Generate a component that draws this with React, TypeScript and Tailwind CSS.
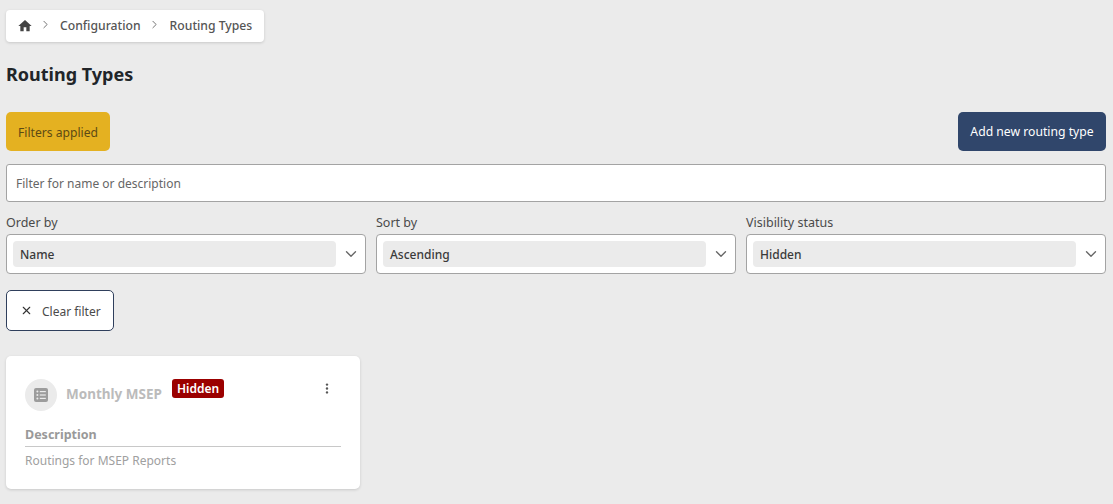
import { ChevronDown, ChevronRight, X } from "lucide-react";

function FilterSelect({ label, value }: { label: string; value: string }) {
  return (
    <div className="min-w-0">
      <label className="block h-[22px] pt-[1px] text-[12.5px] leading-[20px] text-[#4a4a4a]">{label}</label>
      <div className="flex h-[40px] items-center rounded-[4px] border border-[#a3a3a3] bg-white pl-[6px]">
        <div className="flex h-[26px] flex-1 items-center rounded-[4px] bg-[#ebebeb] px-[7px] pt-[2px] text-[12px] font-medium text-[#3a3a3a]">
          {value}
        </div>
        <ChevronDown className="ml-[6px] mr-[5px] h-[18px] w-[18px] text-[#666]" strokeWidth={1.8} />
      </div>
    </div>
  );
}

export default function App() {
  return (
    <div className="h-[504px] overflow-hidden bg-[#ebebeb] pl-[6px] pr-[7px] pt-[10px] font-['Noto_Sans',sans-serif]">
      <nav className="flex h-[32px] w-[258px] items-center rounded-[4px] bg-white pl-[11px] text-[12.2px] font-medium text-[#555] shadow-[0_1px_3px_rgba(0,0,0,0.15)]">
        <svg viewBox="0 0 24 24" className="h-[16px] w-[16px] fill-[#444]">
          <path d="M10 20v-6h4v6h5v-8h3L12 3 2 12h3v8z" />
        </svg>
        <ChevronRight className="mb-[4px] ml-[6px] h-[13px] w-[13px] text-[#555]" strokeWidth={1.5} />
        <span className="ml-[8px] pt-[1px]">Configuration</span>
        <ChevronRight className="mb-[4px] ml-[7px] h-[13px] w-[13px] text-[#555]" strokeWidth={1.5} />
        <span className="ml-[9px] pt-[1px]">Routing Types</span>
      </nav>

      <h1 className="mt-[19px] h-[26px] text-[18px] font-bold leading-[26px] text-[#212529]">Routing Types</h1>

      <div className="mt-[25px] flex items-center justify-between">
        <button className="h-[39px] w-[104px] rounded-[5px] bg-[#e4b121] pt-[3px] text-[12.1px] text-[#5c4a14]">
          Filters applied
        </button>
        <button className="h-[39px] w-[148px] rounded-[5px] bg-[#30466b] pt-[2px] text-[12.2px] text-white">
          Add new routing type
        </button>
      </div>

      <input
        readOnly
        placeholder="Filter for name or description"
        className="mt-[13px] block h-[38px] w-full rounded-[3px] border border-[#a3a3a3] bg-white px-[9px] text-[12px] placeholder:text-[#666]"
      />

      <div className="mt-[10px] grid grid-cols-3 gap-[10px]">
        <FilterSelect label="Order by" value="Name" />
        <FilterSelect label="Sort by" value="Ascending" />
        <FilterSelect label="Visibility status" value="Hidden" />
      </div>

      <button className="mt-[16px] flex h-[41px] w-[108px] items-center rounded-[5px] border border-[#2f3f5c] bg-white pl-[13px] text-[12px] text-[#4a4a4a]">
        <X className="h-[13px] w-[13px] text-[#333]" strokeWidth={2} />
        <span className="ml-[9px] pt-[2px]">Clear filter</span>
      </button>

      <div className="mt-[25px] h-[133px] w-[354px] rounded-[5px] bg-white px-[19px] pt-[23px] shadow-[0_1px_3px_rgba(0,0,0,0.15)]">
        <div className="flex items-start">
          <div className="flex h-[32px] w-[32px] items-center justify-center rounded-full bg-[#ebebeb]">
            <svg viewBox="0 0 16 16" className="h-[16px] w-[16px]">
              <rect x="1" y="1" width="14" height="14" rx="2" fill="#9c9c9c" />
              <g fill="#ebebeb">
                <circle cx="4.4" cy="4.6" r="1" />
                <circle cx="4.4" cy="8" r="1" />
                <circle cx="4.4" cy="11.4" r="1" />
                <rect x="6.8" y="4" width="6" height="1.2" />
                <rect x="6.8" y="7.4" width="6" height="1.2" />
                <rect x="6.8" y="10.8" width="6" height="1.2" />
              </g>
            </svg>
          </div>
          <span className="ml-[9px] mt-[6px] text-[13.5px] font-bold leading-[18px] text-[#bbbbbb]">Monthly MSEP</span>
          <span className="ml-[10px] flex h-[19px] items-center rounded-[3px] bg-[#9b0000] px-[5px] text-[12px] font-semibold text-white">
            Hidden
          </span>
          <svg viewBox="0 0 4 14" className="ml-auto mr-[12px] mt-[4px] h-[11px] w-[4px] fill-[#555]">
            <circle cx="2" cy="2" r="1.5" />
            <circle cx="2" cy="7" r="1.5" />
            <circle cx="2" cy="12" r="1.5" />
          </svg>
        </div>
        <div className="mt-[15px] border-b border-[#c8c8c8] pb-[2px] text-[12.5px] font-bold leading-[18px] text-[#999]">
          Description
        </div>
        <p className="mt-[5px] text-[12px] leading-[18px] text-[#a0a0a0]">Routings for MSEP Reports</p>
      </div>
    </div>
  );
}
